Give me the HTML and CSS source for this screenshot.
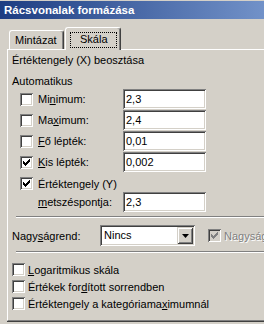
FILE: index.html
```html
<!DOCTYPE html>
<html lang="hu">
<head>
<meta charset="utf-8">
<title>Rácsvonalak formázása</title>
<link rel="stylesheet" href="styles.css">
</head>
<body>
<div class="window">
  <div class="titlebar">Rácsvonalak formázása</div>
  <div class="tabs">
    <div class="tab">Mintázat</div>
    <div class="tab active"><span class="focus">Skála</span></div>
  </div>
  <div class="panel">
    <div class="heading">Értéktengely (X) beosztása</div>
    <div class="sub">Automatikus</div>
    <div class="rows">
      <div class="row"><span class="cb"></span><span class="lbl">Mi<u>n</u>imum:</span><span class="input">2,3</span></div>
      <div class="row"><span class="cb"></span><span class="lbl">Ma<u>x</u>imum:</span><span class="input">2,4</span></div>
      <div class="row"><span class="cb"></span><span class="lbl"><u>F</u>ő lépték:</span><span class="input">0,01</span></div>
      <div class="row"><span class="cb"><svg viewBox="0 0 13 13" width="13" height="13"><path d="M3 5h1v1h1v1h1v-1h1v-1h1v-1h1v-1h1v3h-1v1h-1v1h-1v1h-1v1h-1v-1h-1v-1h-1z" fill="#000"/></svg></span><span class="lbl"><u>K</u>is lépték:</span><span class="input">0,002</span></div>
      <div class="row short"><span class="cb"><svg viewBox="0 0 13 13" width="13" height="13"><path d="M3 5h1v1h1v1h1v-1h1v-1h1v-1h1v-1h1v3h-1v1h-1v1h-1v1h-1v1h-1v-1h-1v-1h-1z" fill="#000"/></svg></span><span class="lbl">Értéktengely (Y)</span></div>
      <div class="row"><span class="cb-space"></span><span class="lbl"><u>m</u>etszéspontja:</span><span class="input">2,3</span></div>
    </div>
    <div class="sep"></div>
    <div class="scale-row">
      <span class="scale-lbl">Nagy<u>s</u>ágrend:</span>
      <div class="select"><span class="select-val">Nincs</span><span class="select-btn"><svg viewBox="0 0 7 4" width="7" height="4"><path d="M0 0h7L3.5 4z" fill="#000"/></svg></span></div>
      <span class="cb disabled"><svg viewBox="0 0 13 13" width="13" height="13"><path d="M3 5h1v1h1v1h1v-1h1v-1h1v-1h1v-1h1v3h-1v1h-1v1h-1v1h-1v1h-1v-1h-1v-1h-1z" fill="#808080"/></svg></span>
      <span class="disabled-text">Nagyság</span>
    </div>
    <div class="sep"></div>
    <div class="checks">
      <div class="check"><span class="cb"></span><span class="lbl2"><u>L</u>ogaritmikus skála</span></div>
      <div class="check"><span class="cb"></span><span class="lbl2">Értékek for<u>d</u>ított sorrendben</span></div>
      <div class="check"><span class="cb"></span><span class="lbl2">Értéktengely a kategóriama<u>x</u>imumnál</span></div>
    </div>
  </div>
</div>
</body>
</html>
```

FILE: styles.css
```css
* { box-sizing: border-box; }
html, body {
  margin: 0;
  padding: 0;
  width: 264px;
  height: 324px;
  overflow: hidden;
  background: #d4d0c8;
}
body {
  font-family: "Liberation Sans", Arial, sans-serif;
  font-size: 11px;
  color: #000;
}
u { text-decoration: underline; text-underline-offset: 1px; }
.window {
  width: 300px;
}
.titlebar {
  height: 19px;
  border-top: 1px solid #d4d0c8;
  background: linear-gradient(to right, #1d3d82, #7d9dd2);
  color: #fff;
  font-weight: bold;
  font-size: 11.5px;
  line-height: 18px;
  padding-left: 4px;
  white-space: nowrap;
}
.tabs {
  display: flex;
  align-items: flex-end;
  height: 22px;
  margin-top: 8px;
  padding-left: 9px;
}
.tab {
  height: 19px;
  width: 55px;
  border-top: 1px solid #fff;
  border-left: 1px solid #fff;
  border-right: 1px solid #404040;
  box-shadow: inset -1px 0 #808080;
  border-radius: 3px 3px 0 0;
  padding: 3px 0 0 5px;
  line-height: 13px;
}
.tab.active {
  position: relative;
  z-index: 1;
  width: 56px;
  height: 23px;
  margin-left: 1px;
  margin-bottom: -1px;
  background: #d4d0c8;
  padding: 4px 0 0 4px;
}
.focus {
  display: block;
  width: 47px;
  height: 16px;
  outline: 1px dotted #000;
  outline-offset: -1px;
  padding: 1px 0 0 10px;
}
.panel {
  margin-left: 7px;
  height: 272px;
  border-top: 1px solid #fff;
  border-left: 1px solid #fff;
  border-bottom: 1px solid #808080;
  box-shadow: 0 1px #404040;
  padding: 4px 0 0 4px;
}
.heading { line-height: 13px; height: 13px; }
.sub { line-height: 13px; height: 13px; margin-top: 8px; }
.rows {
  display: flex;
  flex-direction: column;
  gap: 1px;
  margin-top: 1px;
  padding-left: 8px;
}
.row {
  display: flex;
  align-items: center;
  height: 20px;
}
.row.short {
  height: 13px;
  margin-top: 4px;
  margin-bottom: 1px;
}
.cb, .cb-space {
  flex: none;
  width: 13px;
  height: 13px;
}
.cb {
  display: block;
  background: #fff;
  box-shadow: inset 1px 1px #808080, inset -1px -1px #fff, inset 2px 2px #404040, inset -2px -2px #d4d0c8;
}
.cb svg { display: block; }
.cb.disabled { background: #d4d0c8; }
.lbl {
  flex: none;
  margin-left: 5px;
  width: 85px;
  white-space: nowrap;
}
.input {
  flex: none;
  display: block;
  width: 83px;
  height: 20px;
  background: #fff;
  box-shadow: inset 1px 1px #808080, inset -1px -1px #fff, inset 2px 2px #404040, inset -2px -2px #d4d0c8;
  padding: 3px 0 0 3px;
  line-height: 14px;
}
.sep {
  height: 2px;
  border-top: 1px solid #808080;
  border-bottom: 1px solid #fff;
  margin-left: 4px;
}
.rows + .sep { margin-top: 4px; }
.scale-row {
  display: flex;
  align-items: center;
  height: 21px;
  margin-top: 7px;
  margin-bottom: 5px;
  white-space: nowrap;
}
.scale-lbl { flex: none; width: 88px; }
.select {
  flex: none;
  display: flex;
  width: 95px;
  height: 21px;
  background: #fff;
  box-shadow: inset 1px 1px #808080, inset -1px -1px #fff, inset 2px 2px #404040, inset -2px -2px #d4d0c8;
  padding: 2px;
}
.select-val {
  flex: 1;
  padding: 1px 0 0 2px;
  line-height: 14px;
}
.select-btn {
  flex: none;
  width: 16px;
  height: 17px;
  background: #d4d0c8;
  box-shadow: inset 1px 1px #d4d0c8, inset -1px -1px #404040, inset 2px 2px #fff, inset -2px -2px #808080;
  display: flex;
  align-items: center;
  justify-content: center;
}
.select-btn svg { display: block; }
.scale-row .cb { margin-left: 13px; }
.disabled-text {
  flex: none;
  margin-left: 3px;
  color: #808080;
  text-shadow: 1px 1px #fff;
}
.checks {
  margin-top: 8px;
  display: flex;
  flex-direction: column;
}
.check {
  display: flex;
  align-items: center;
  height: 17px;
  white-space: nowrap;
}
.lbl2 { margin-left: 3px; }
```
